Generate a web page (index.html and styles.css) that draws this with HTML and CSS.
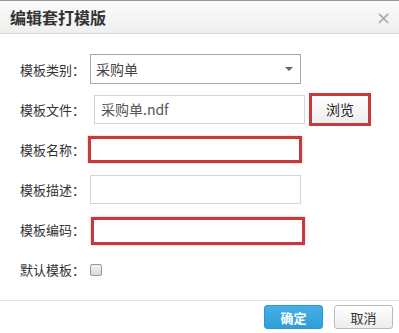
FILE: index.html
```html
<!DOCTYPE html>
<html lang="zh">
<head>
  <meta charset="UTF-8" />
  <title>编辑套打模版</title>
  <link rel="stylesheet" href="styles.css">
</head>
<body>

<div class="dialog">
  <div class="dialog-head">
    <h2>编辑套打模版</h2>
    <span class="close">×</span>
  </div>

  <div class="dialog-body">
    <div class="row">
      <label>模板类别：</label>
      <div class="select">采购单<span class="caret"></span></div>
    </div>
    <div class="row">
      <label>模板文件：</label>
      <input type="text" class="file" value="采购单.ndf" />
      <button class="browse">浏览</button>
    </div>
    <div class="row">
      <label>模板名称：</label>
      <input type="text" class="marked name" />
    </div>
    <div class="row">
      <label>模板描述：</label>
      <input type="text" />
    </div>
    <div class="row">
      <label>模板编码：</label>
      <input type="text" class="marked code" />
    </div>
    <div class="row">
      <label>默认模板：</label>
      <span class="check"></span>
    </div>
  </div>

  <div class="dialog-foot">
    <button class="btn primary">确定</button>
    <button class="btn">取消</button>
  </div>
</div>

</body>
</html>
```

FILE: styles.css
```css
body {
  margin: 0;
  font-family: "Noto Sans CJK SC", "Liberation Sans", sans-serif;
  background: #fff;
  color: #333;
}
.dialog {
  width: 399px;
  height: 333px;
  border-top: 1px solid #999;
  box-sizing: border-box;
  display: flex;
  flex-direction: column;
}
.dialog-head {
  height: 32px;
  background: linear-gradient(#fbfbfb, #efefef);
  border-bottom: 1px solid #d6d6d6;
  display: flex;
  align-items: center;
  justify-content: space-between;
  padding: 0 8px 0 10px;
}
.dialog-head h2 {
  margin: 0;
  font-size: 16px;
  font-weight: bold;
  color: #333;
}
.close {
  color: #aaa;
  font-size: 18px;
  font-family: "DejaVu Sans", sans-serif;
}
.dialog-body {
  flex: 1;
  padding: 15px 0 0 20px;
}
.row {
  height: 40px;
  display: flex;
  align-items: center;
}
.row label {
  width: 70px;
  font-size: 13px;
  color: #333;
}
.select, input {
  box-sizing: border-box;
  width: 211px;
  height: 29px;
  border: 1px solid #d4d4d4;
  background: #fff;
  font-family: inherit;
  font-size: 14px;
  color: #444;
  padding: 0 5px;
  margin: 0;
  outline: none;
}
.select {
  height: 30px;
  border-color: #a8a8a8;
  display: flex;
  align-items: center;
  justify-content: space-between;
  padding: 0 7px 0 5px;
}
.caret {
  border-left: 4px solid transparent;
  border-right: 4px solid transparent;
  border-top: 4px solid #666;
}
input.file {
  margin-left: 4px;
  padding-left: 6px;
  color: #555;
}
.browse {
  margin-left: 4px;
  height: 33px;
  width: 62px;
  border: 3px solid #c8393c;
  background: linear-gradient(#fff, #eee);
  font-family: inherit;
  font-size: 14px;
  color: #222;
}
input.marked {
  border: 3px solid #c8393c;
  box-shadow: 0 0 2px rgba(220, 80, 80, 0.5);
  width: 214px;
}
input.name {
  height: 27px;
  margin-left: -2px;
}
input.code {
  height: 28px;
  margin: 4px 0 0 1px;
}
.check {
  width: 10px;
  height: 10px;
  border: 1px solid #999;
  border-radius: 2px;
  background: linear-gradient(#f4f4f4, #d8d8d8);
  margin: 1px 0 0 0;
}
.dialog-foot {
  height: 32px;
  border-top: 1px solid #e2e2e2;
  display: flex;
  justify-content: flex-end;
  align-items: center;
  gap: 11px;
  padding-right: 6px;
}
.btn {
  height: 24px;
  width: 59px;
  border: 1px solid #bbb;
  border-radius: 3px;
  background: linear-gradient(#fff, #ececec);
  font-family: inherit;
  font-size: 13px;
  color: #333;
  padding: 0;
}
.btn.primary {
  border-color: #2b9ad3;
  background: linear-gradient(#45b0e6, #2f9ed8);
  color: #fff;
  font-weight: bold;
}
```
